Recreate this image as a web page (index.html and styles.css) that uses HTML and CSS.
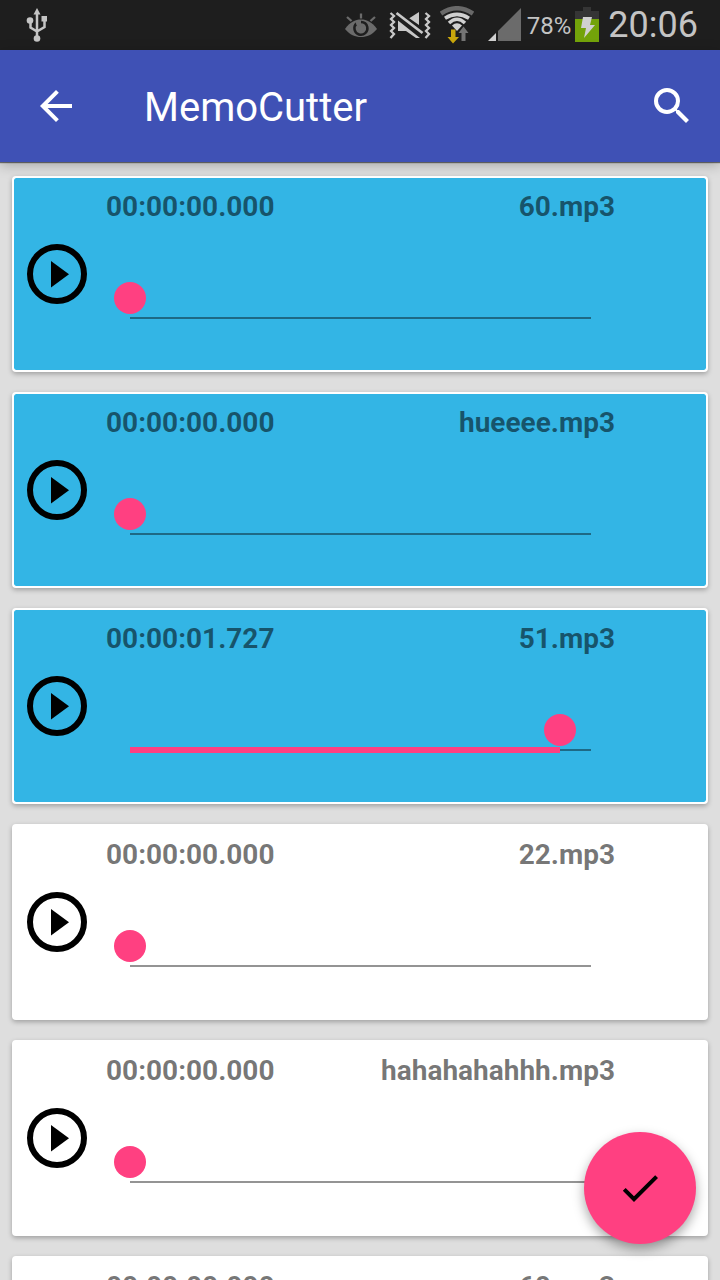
FILE: index.html
```html
<!DOCTYPE html>
<html lang="en">
<head>
<meta charset="utf-8">
<meta name="viewport" content="width=device-width, initial-scale=1">
<title>MemoCutter</title>
<link rel="stylesheet" href="styles.css">
</head>
<body>
<svg class="symbols" aria-hidden="true">
  <symbol id="play" viewBox="0 0 24 24">
    <circle cx="12" cy="12" r="9" fill="none" stroke="#000" stroke-width="2"/>
    <path d="M10 7.700v8.800l6-4.400z"/>
  </symbol>
</svg>
<div class="app">
  <div class="status">
    <svg class="status-usb" width="22" height="36" viewBox="0 0 22 36" fill="#c4c4c4">
      <path d="M11 1l3.500 6.500h-7z"/>
      <circle cx="4" cy="13.500" r="3.300"/>
      <rect x="15.500" y="9" width="5.500" height="5.500"/>
      <circle cx="11" cy="31.500" r="3.300"/>
      <path d="M11 6v25M4.500 14v6.500l6.500 4M18.500 14v6l-7.500 4.500" fill="none" stroke="#c4c4c4" stroke-width="2.500"/>
    </svg>
    <svg width="32" height="36" viewBox="0 0 32 36">
      <path d="M0 22C5 15 10 12.500 16 12.500s11 2.500 16 9.500c-5 6-10 8-16 8S5 28 0 22z" fill="#6b6b6b"/>
      <path d="M11.500 16.500A6.500 6.500 0 1 0 22.300 20 6.500 6.500 0 0 0 16 15" fill="none" stroke="#1e1e1e" stroke-width="2.500"/>
      <circle cx="16" cy="21.500" r="2.800" fill="#6b6b6b"/>
      <path d="M16 21l-4.500-5M16 11.500V6.500M6.500 14L2 10M25.500 14l4.500-4" stroke="#6b6b6b" stroke-width="2.300"/>
    </svg>
    <svg class="status-mute" width="42" height="36" viewBox="0 0 42 36">
      <path d="M9 13.500L31 31h-4l-10-7H9zM20.300 11.300L30 5v13z" fill="#c8c8c8"/>
      <path d="M7.500 6l26 20" stroke="#c8c8c8" stroke-width="2.800"/>
      <path d="M1.500 6l3.500 3-3 3 3 3-3 3 3 3-3 3 3 3-3.500 4M36.500 6l3.500 3-3 3 3 3-3 3 3 3-3 3 3 3-3.500 4" fill="none" stroke="#c8c8c8" stroke-width="2.300"/>
    </svg>
    <svg class="status-wifi" width="34" height="38" viewBox="0 0 34 38">
      <path d="M1 7.500Q17-3 33 7.500" fill="none" stroke="#696969" stroke-width="4.500"/>
      <path d="M5 12.200Q17 4.500 29 12.200M9 17Q17 9.500 25 17" fill="none" stroke="#d0d0d0" stroke-width="3.500"/>
      <path d="M12 19.500q5-4.500 10 0L17 25z" fill="#d0d0d0"/>
      <path d="M11 23.500h4.500V31H19l-6 6.500L7.500 31H11z" fill="#c9a70c"/>
      <path d="M23.500 20.500l5 6.500h-3v8h-4v-8h-3z" fill="#747474"/>
    </svg>
    <svg class="status-signal" width="33" height="34" viewBox="0 0 33 34">
      <path d="M33 0v33H10V23z" fill="#6b6b6b"/><path d="M8 25v8H0z" fill="#d0d0d0"/>
    </svg>
    <span class="percent">78%</span>
    <svg width="24" height="36" viewBox="0 0 24 36">
      <path d="M8 0h8v4h8v8H0V4h8z" fill="#353535"/><path d="M0 12h24v23H0z" fill="#73a30a"/>
      <path d="M8 10h9l-2 8h5L9 31l2-10H6z" fill="#d0d0d0"/>
    </svg>
    <time class="clock">20:06</time>
  </div>
  <header class="bar">
    <button class="icon-button" aria-label="Back"><svg width="48" height="48" viewBox="0 0 24 24" fill="#fff"><path d="M20 11H7.830l5.590-5.590L12 4l-8 8 8 8 1.410-1.410L7.830 13H20z"/></svg></button>
    <h1 class="title">MemoCutter</h1>
    <button class="icon-button" aria-label="Search"><svg width="48" height="48" viewBox="0 0 24 24" fill="#fff"><path d="M15.500 14h-.79l-.28-.27A6.470 6.470 0 0 0 16 9.500 6.500 6.500 0 1 0 9.500 16c1.610 0 3.090-.59 4.230-1.570l.27.28v.79l5 4.990L20.490 19zm-6 0a4.500 4.500 0 1 1 0-9 4.500 4.500 0 0 1 0 9z"/></svg></button>
  </header>
  <main class="list">
    <article class="card selected">
      <button class="play" aria-label="Play 60.mp3"><svg width="72" height="72"><use href="#play"/></svg></button>
      <div class="track">
        <div class="labels"><span>00:00:00.000</span><span>60.mp3</span></div>
        <input class="seek" type="range" min="0" max="1851" value="0" aria-label="Position in 60.mp3">
      </div>
    </article>
    <article class="card selected">
      <button class="play" aria-label="Play hueeee.mp3"><svg width="72" height="72"><use href="#play"/></svg></button>
      <div class="track">
        <div class="labels"><span>00:00:00.000</span><span>hueeee.mp3</span></div>
        <input class="seek" type="range" min="0" max="1851" value="0" aria-label="Position in hueeee.mp3">
      </div>
    </article>
    <article class="card selected">
      <button class="play" aria-label="Play 51.mp3"><svg width="72" height="72"><use href="#play"/></svg></button>
      <div class="track">
        <div class="labels"><span>00:00:01.727</span><span>51.mp3</span></div>
        <input class="seek" type="range" min="0" max="1851" value="1727" style="--played: 0.933" aria-label="Position in 51.mp3">
      </div>
    </article>
    <article class="card">
      <button class="play" aria-label="Play 22.mp3"><svg width="72" height="72"><use href="#play"/></svg></button>
      <div class="track">
        <div class="labels"><span>00:00:00.000</span><span>22.mp3</span></div>
        <input class="seek" type="range" min="0" max="1851" value="0" aria-label="Position in 22.mp3">
      </div>
    </article>
    <article class="card">
      <button class="play" aria-label="Play hahahahahhh.mp3"><svg width="72" height="72"><use href="#play"/></svg></button>
      <div class="track">
        <div class="labels"><span>00:00:00.000</span><span>hahahahahhh.mp3</span></div>
        <input class="seek" type="range" min="0" max="1851" value="0" aria-label="Position in hahahahahhh.mp3">
      </div>
    </article>
    <article class="card">
      <button class="play" aria-label="Play 60.mp3"><svg width="72" height="72"><use href="#play"/></svg></button>
      <div class="track">
        <div class="labels"><span>00:00:00.000</span><span>60.mp3</span></div>
        <input class="seek" type="range" min="0" max="1851" value="0" aria-label="Position in 60.mp3">
      </div>
    </article>
  </main>
  <button class="fab" aria-label="Done"><svg width="48" height="48" viewBox="0 0 24 24"><path d="M9 16.170L4.830 12l-1.420 1.410L9 19 21 7l-1.410-1.410z"/></svg></button>
</div>
</body>
</html>
```
FILE: styles.css
```css
* { box-sizing: border-box; }

body {
  margin: 0;
  font-family: Roboto, "Noto Sans", sans-serif;
  background: #dedede;
}

button {
  border: 0;
  padding: 0;
  background: none;
  cursor: pointer;
}

svg { display: block; flex: none; }

.symbols { position: absolute; width: 0; height: 0; }

.app {
  display: flex;
  flex-direction: column;
  height: 100vh;
}

.status {
  flex: none;
  display: flex;
  align-items: center;
  height: 50px;
  padding: 0 22px 0 26px;
  background: #1e1e1e;
  color: #c4c4c4;
}

.status-usb { margin-right: auto; }
.status-mute { margin-left: 12px; }
.status-wifi { margin-left: 9px; }
.status-signal { margin-left: 14px; }
.percent { margin: 2px 4px 0 6px; font-size: 24px; }
.clock { margin-left: 9px; font-size: 36px; }

.bar {
  flex: none;
  z-index: 1;
  display: flex;
  align-items: center;
  height: 112px;
  padding: 0 24px 0 32px;
  background: #3f51b5;
  color: #fff;
  box-shadow: 0 1px 1px rgba(0, 0, 0, 0.5), 0 3px 12px rgba(0, 0, 0, 0.25);
}

.title {
  flex: 1;
  margin: 0 0 0 64px;
  padding-top: 4px;
  font-size: 40px;
  font-weight: 400;
  line-height: 48px;
}

.list {
  flex: 1;
  min-height: 0;
  display: flex;
  flex-direction: column;
  gap: 20px;
  padding: 14px 12px;
  overflow-y: auto;
  scrollbar-width: none;
}

.card {
  flex: none;
  display: flex;
  align-items: center;
  padding: 0 91px 0 7px;
  border: 2px solid #fff;
  border-radius: 4px;
  background: #fff;
  box-shadow: 0 2px 5px rgba(0, 0, 0, 0.28);
}

.selected { background: linear-gradient(#33b5e5, #33b5e5) padding-box, #fff; }

.track {
  flex: 1;
  min-width: 0;
  display: flex;
  flex-direction: column;
  gap: 59px;
  margin-left: 13px;
  padding: 13px 0 49px;
}

.labels {
  display: flex;
  justify-content: space-between;
  color: rgba(0, 0, 0, 0.54);
  font-size: 28px;
  font-weight: 700;
  line-height: 32px;
}

/* The groove is inset by half a thumb so both ends meet the thumb's centre. */
.seek {
  --played: 0;
  appearance: none;
  height: 39px;
  margin: 0 8px;
  background:
    linear-gradient(#ff4081, #ff4081) 16px 33px / calc((100% - 32px) * var(--played)) 6px no-repeat,
    linear-gradient(rgba(0, 0, 0, 0.42), rgba(0, 0, 0, 0.42)) 16px 35px / calc(100% - 32px) 2px no-repeat;
}

.seek::-webkit-slider-runnable-track { height: 39px; }

.seek::-webkit-slider-thumb {
  appearance: none;
  width: 32px;
  height: 32px;
  border-radius: 50%;
  background: #ff4081;
}

.fab {
  position: fixed;
  right: 24px;
  bottom: 36px;
  z-index: 2;
  display: grid;
  place-items: center;
  width: 112px;
  height: 112px;
  border-radius: 50%;
  background: #ff4081;
  box-shadow: 0 5px 12px rgba(0, 0, 0, 0.35);
}
```
